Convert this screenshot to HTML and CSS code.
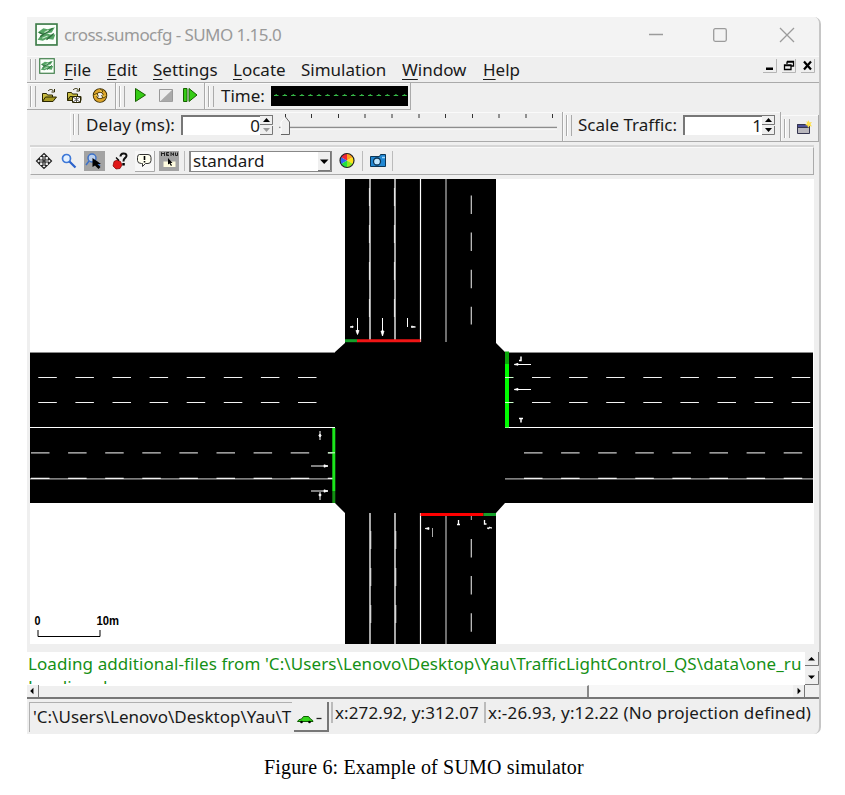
FILE: index.html
```
<!DOCTYPE html>
<html lang="en">
<head>
<meta charset="utf-8">
<title>cross.sumocfg - SUMO 1.15.0</title>
<link rel="stylesheet" href="styles.css">
</head>
<body>
<svg width="0" height="0" class="defs">
  <defs>
    <symbol id="logo" viewBox="0 0 22 22">
      <rect x="1" y="1" width="20" height="20" fill="#fafffa" stroke="#3e7d49" stroke-width="1.600"/>
      <path d="M2.500 9 8 5l4 1 7-2-3 5-5 1-4 1zM2.500 16l3-4 6-2 3 1 5 0-2 5-6-1-4 2z" fill="#56a565"/>
      <path d="M5 13 17 5M4 9l4 2M11 16l7-6" stroke="#2e6c3c" stroke-width="1.300"/>
      <path d="M9 9l4-2M7 14.500l5-2" stroke="#cfe9d2" stroke-width="1"/>
    </symbol>
  </defs>
</svg>
<main class="window">
  <header class="titlebar">
    <svg class="logo"><use href="#logo"/></svg>
    <span class="title">cross.sumocfg - SUMO 1.15.0</span>
    <svg class="win-buttons" width="146" height="16" viewBox="0 0 146 16" fill="none" stroke="#9b9b9b" stroke-width="1.300">
      <path d="M0 7.500h14"/><rect x="64.700" y="1.700" width="12.600" height="12.600" rx="1.500"/><path d="M131 1l14 14M145 1l-14 14"/>
    </svg>
  </header>

  <nav class="menubar">
    <i class="grip"></i>
    <svg class="logo small"><use href="#logo"/></svg>
    <span class="menu m-file"><u>F</u>ile</span>
    <span class="menu m-edit"><u>E</u>dit</span>
    <span class="menu m-settings"><u>S</u>ettings</span>
    <span class="menu m-locate"><u>L</u>ocate</span>
    <span class="menu m-sim">Simulation</span>
    <span class="menu m-window"><u>W</u>indow</span>
    <span class="menu m-help"><u>H</u>elp</span>
    <svg class="mdi" width="52" height="14" viewBox="0 0 52 14">
      <path d="M13.500 0v13.500H0M32.500 0v13.500H19M51.500 0v13.500H38" fill="none" stroke="#b5b5b5"/>
      <path d="M3 8.500h7v2.500H3z"/>
      <path d="M24 2.500h6.500v4.500h-2M24 5V2.500M21.500 6h6.500v4.500h-6.500zM24 3h6.500M21.500 6.500H28" fill="none" stroke="#000" stroke-width="1.300"/>
      <path d="M41 2.500l7 8M48 2.500l-7 8" stroke="#000" stroke-width="2.200"/>
    </svg>
  </nav>

  <section class="toolbar main-tools">
    <div class="dock files">
      <i class="grip"></i>
      <svg width="84" height="20" viewBox="0 0 84 20">
        <g stroke="#2a2600" fill="#c9bd43">
          <path d="M3.500 15.500v-8h4l1 1.500h5v2"/><path d="M3.500 15.500l3-4.500h11l-3.500 4.500z" fill="#a89b25"/><path d="M9 5c2-2 4-2 5.500 0M12.500 6h3V3" fill="none"/>
          <path d="M28.500 14.500v-8h4l1 1.500h5v2"/><path d="M28.500 14.500l2.500-4h11v4z" fill="#a89b25"/><path d="M34 4c2-2 4-2 5.500 0M37.500 5h3V2" fill="none"/>
          <path d="M33.500 10.500h8v6h-8z" fill="#fff"/><path d="M34 11l7 5M41 11l-7 5M37.500 11v5" fill="none" stroke="#555"/>
        </g>
        <circle cx="61" cy="9.500" r="5" fill="none" stroke="#3c2c00" stroke-width="4.500"/>
        <circle cx="61" cy="9.500" r="5" fill="none" stroke="#dca52b" stroke-width="2.800"/>
        <path d="M54 9l4-1.500 1.500 3M68 10l-4 2-1.500-3M61 3l3 2-2 2" fill="#f6cf50" stroke="#3c2c00" stroke-width=".8"/>
      </svg>
    </div>
    <div class="dock play">
      <i class="grip"></i>
      <svg width="66" height="20" viewBox="0 0 66 20">
        <path d="M2.500 2.500v13l10-6.500z" fill="#35cc16" stroke="#176000"/>
        <path d="M26.500 3.500h13v12h-13z" fill="#eee" stroke="#999"/><path d="M39 4v11.500H27z" fill="#aaa"/>
        <path d="M50.500 2.500h3.500v13h-3.500zM56 2.500v13l8-6.500z" fill="#35cc16" stroke="#176000"/>
      </svg>
    </div>
    <div class="dock time">
      <i class="grip"></i>
      <span class="label t-time">Time:</span>
      <svg class="lcd" width="137" height="20" viewBox="0 0 137 20">
        <path d="M3 9.500h134" stroke="#36b847" stroke-width="1.200" stroke-dasharray="4.500 4.050"/>
        <path d="M4.500 8.700h132" stroke="#36b847" stroke-width="1" stroke-dasharray="1.500 7.050"/>
      </svg>
    </div>
  </section>

  <section class="toolbar speed-tools">
    <div class="dock delay">
      <i class="grip"></i>
      <span class="label t-delay">Delay (ms):</span>
      <span class="spin s-delay">0<svg width="13" height="19" viewBox="0 0 13 19"><path d="M12.500 0v8.500H0M12.500 10v8.500H0" fill="none" stroke="#777"/><path d="M3 6l3.500-4L10 6z"/><path d="M3 12l3.500 4 3.500-4z" fill="#999"/></svg></span>
      <svg class="slider" width="282" height="24" viewBox="0 0 282 24">
        <path d="M6.500 1v4M32.500 1v4M59.500 1v4M86 1v4M113 1v4M140 1v4M166.500 1v4M193.500 1v4M220 1v4M247 1v4M273.500 1v4" stroke="#333"/>
        <path d="M0 14.500h278" stroke="#8d8d8d" stroke-width="1.500"/><path d="M0 16h278" stroke="#fff"/>
        <path d="M2 21.500V9L6.500 4l4 5v12.500z" fill="#efefef"/><path d="M2 21V9l4.500-5" fill="none" stroke="#fff"/><path d="M6.500 4l4 5v12.500H2" fill="none" stroke="#666"/>
      </svg>
    </div>
    <div class="dock scale">
      <i class="grip"></i>
      <span class="label t-scale">Scale Traffic:</span>
      <span class="spin s-scale">1<svg width="13" height="19" viewBox="0 0 13 19"><path d="M12.500 0v8.500H0M12.500 10v8.500H0" fill="none" stroke="#777"/><path d="M3 6l3.500-4L10 6z"/><path d="M3 12l3.500 4 3.500-4z"/></svg></span>
    </div>
    <div class="dock newview">
      <i class="grip"></i>
      <svg width="16" height="16" viewBox="0 0 16 16"><path d="M1.500 4.500h12v9h-12z" fill="#b9b7bd" stroke="#34344f"/><path d="M1.500 4.500h12v3h-12z" fill="#4b4f96" stroke="#34344f"/><path d="M12.500 0l1 2.500 2.500-.5-1.500 2 1.500 2.500-2.500-.5-1.500 2-.5-2.500L9 5l2-1.500-.5-2.500 1.500 1z" fill="#ffe14b"/></svg>
    </div>
  </section>

  <section class="viewbar">
    <svg width="158" height="24" viewBox="0 0 158 24">
      <g fill="#fff" stroke="#222" stroke-width="1.200"><path d="M14 4.500l3 3h-2v3.500h3.500V9l3 3-3 3v-2H15v3.500h2l-3 3-3-3h2V13H9.500v2l-3-3 3-3v2H13V7.500h-2z"/><circle cx="14" cy="12" r="1"/></g>
      <circle cx="36.500" cy="9.500" r="4" fill="#e4f1ff" stroke="#3d78d8" stroke-width="1.700"/><path d="M39.500 12.500l6 6" stroke="#2c62cb" stroke-width="2.200"/>
      <path d="M54 2h21v20H54z" fill="#a3a3a3"/><circle cx="62" cy="9" r="4" fill="#bcd0ee" stroke="#3d71c8" stroke-width="1.500"/><path d="M59 12l-3 4M66 12l4 5" stroke="#3d71c8" stroke-width="1.500"/><path d="M62.500 9v9l2.500-1.500 3.500 3.500 2-2-3-3h3.500z"/>
      <path d="M84 12.500l3-1.500 3.500 1.500 1.500 3.500-2 3.500-4 .5-3-3z" fill="#e01818" stroke="#7a0000" stroke-width=".7"/><path d="M86 8.500l3 3" stroke="#000" stroke-width="1.300"/><path d="M90.500 7.500c0-4 6-4 6-.8 0 2.500-3.300 2-3 5.800" fill="none" stroke="#111" stroke-width="2"/><path d="M92.300 14h2.500v2.500h-2.500z"/>
      <path d="M105 2h19v20h-19z" fill="#f7f7f7"/><path d="M124.500 2v20.500H105" fill="none" stroke="#aaa"/><path d="M109.500 5.500h8.500q3 0 3 3v3q0 3-3 3h-2.500l-3 3v-3h-1q-4 0-4-3v-3q0-3 2-3z" fill="#fffff0" stroke="#333"/><path d="M114.500 7v4M114.500 12v1.500" stroke="#000" stroke-width="1.600"/>
      <path d="M129 2h20v20h-20z" fill="#a3a3a3"/><path d="M133.500 12.500h12v5.500h-12z" fill="#fffcdf"/><path d="M131.500 7V3.500l1.500 1.500 1.500-1.500V7M139 3.500h-2.500v3h2.500M136.500 5.200h2M141 7V3.500l2.500 3V3.500M145.500 3.500v3h2v-3" fill="none" stroke="#222"/><path d="M138 9v6.500l1.500-1 1.500 2.500 1-.7-1.500-2.300h2z"/>
      <path d="M154.500 2v20" stroke="#bbb"/>
    </svg>
    <span class="combo">standard<svg width="13" height="19" viewBox="0 0 13 19"><path d="M12.500 0v18.500H0" fill="none" stroke="#777"/><path d="M2 7.500h8.500L6.200 12z"/></svg></span>
    <svg class="after" width="66" height="24" viewBox="0 0 66 24">
      <g stroke="none"><path d="M14 11.500V4.500A7 7 0 0 1 20 8z" fill="#ff9f1c"/><path d="M14 11.500L20 8a7 7 0 0 1 0 7z" fill="#ffe21c"/><path d="M14 11.500l6 3.500a7 7 0 0 1-6 3.500z" fill="#8be81c"/><path d="M14 11.500v7A7 7 0 0 1 8 15z" fill="#20df41"/><path d="M14 11.500L8 15a7 7 0 0 1 0-7z" fill="#2e66f0"/><path d="M14 11.500L8 8a7 7 0 0 1 6-3.500z" fill="#ec2538"/></g>
      <circle cx="14" cy="11.500" r="7" fill="none" stroke="#222" stroke-width="1.200"/>
      <path d="M29.500 2v20M59.500 2v20" stroke="#bbb"/>
      <path d="M37.500 7.500h9l1-2h5v12h-15z" fill="#2187d2" stroke="#0b3556"/><circle cx="44" cy="12.500" r="3.500" fill="#bfe6ff" stroke="#0b3556" stroke-width="1.300"/><path d="M49 8.500h3" stroke="#9ad7ff" stroke-width="1.500"/>
    </svg>
  </section>

  <section class="view">
    <svg width="784" height="465" viewBox="30 179 784 465">
      <path d="M345 179h151v164l9 9h308v151h-308l-9 10v131H345V513l-10-10H30V352h305l10-9z"/>
      <path d="M30 352.500h305M505 352.500h308" stroke="#8a8a8a"/>
      <g stroke="#fff" stroke-width="1.200">
        <path d="M30 427.500h305M505 427.500h308M420.500 179v163M420.500 513v131"/>
        <path d="M370 179v161M395 179v161" stroke-width="1.300"/><path d="M370 513v131M395 513v131" stroke-width="1.300"/>
        <path d="M369.400 188v18M394.400 188v18M369.400 225v18M394.400 225v18M369.400 262v18M394.400 262v18M369.400 299v18M394.400 299v18M370.800 531v18M395.800 531v18M370.800 568v18M395.800 568v18M370.800 605v18M395.800 605v18" stroke-width=".8"/>
      </g>
      <path d="M446 179v163M446 513v131M30 478.800h303M505 478.800h308" stroke="#aaa" stroke-width="1.300"/>
      <g stroke="#f2f2f2" stroke-width="1.200" stroke-dasharray="18.500 18.600">
        <path d="M38.300 377.500h280M38.300 402.500h280M532 377.500h279M532 402.500h279"/>
        <path d="M31 478.300h302M524 478.300h288"/>
        <path d="M31 452.800h302M524 452.800h288" stroke="#ccc"/>
        <path d="M471.300 195.500v129M471.300 539v105" stroke="#ccc"/>
      </g>
      <path d="M471.300 514v6" stroke="#bbb"/>
      <g stroke-width="3" fill="none">
        <path d="M345 340.700h12" stroke="#16a02a"/><path d="M357 340.700h63.500" stroke="#f01515"/>
        <path d="M420.500 514.500h63" stroke="#f00"/><path d="M483.500 514.500h12.500" stroke="#16a02a"/>
        <path d="M333.800 428v63" stroke="#1be51b"/><path d="M333.800 491v12" stroke="#129012"/>
        <path d="M507 364v63.500" stroke="#00fb00" stroke-width="4"/><path d="M507 351.500V364" stroke="#0ba60b" stroke-width="4"/>
      </g>
      <path d="M505 377.500h8.500M505 402.500h8.500M328 452.800h7" stroke="#cfc"/>
      <g class="arrows" stroke="#fff" fill="#fff">
        <path d="M357.500 318v16M382.500 318v17M407.500 318v9" fill="none"/>
        <path d="M356 330.500h3l-1.500 4zM381 331h3l-1.500 5zM350 327l3-1v1.500zM411.500 326v1.500l4-.5z" stroke-width=".8"/>
        <path d="M515 364.500h16M515 389.500h16M311 466h17M311 491h17" fill="none"/>
        <path d="M514 364.500l4-1.200v2zM514 389.500l4-1.200v2zM328 466l-4-1.200v2.400zM328 491l-4-1.200v2.400z" stroke-width=".7"/>
        <path d="M521 356.500v4h-2M519 418.500h4M521 418.500v4" stroke-width="1.500" fill="none"/>
        <path d="M320 431v9M320 492v8" fill="none"/><circle cx="320" cy="435.500" r="1"/><circle cx="320" cy="495" r="1"/>
        <path d="M432.500 528v9" stroke="#aaa"/><path d="M425 528.500l4-1v2zM487 528l5 0-3-1v2z" stroke-width=".7"/><path d="M458.500 520v4M457 524.500h3M484.500 520v4h2" fill="none" stroke-width="1.300"/>
      </g>
      <path d="M38 630v6.500h62V630" fill="none" stroke="#000"/>
      <text class="scale-text" x="34.500" y="625" textLength="6" lengthAdjust="spacingAndGlyphs">0</text>
      <text class="scale-text" x="96.500" y="625" textLength="22.500" lengthAdjust="spacingAndGlyphs">10m</text>
    </svg>
  </section>

  <section class="log">
    <div class="log-text"><p class="t-log">Loading additional-files from 'C:\Users\Lenovo\Desktop\Yau\TrafficLightControl_QS\data\one_ru</p><p>Loading done.</p></div>
    <svg width="14" height="33" viewBox="0 0 14 33"><path d="M0 0h14v33H0z" fill="#efefef"/><path d="M13.500 0v13.500H0M13.500 19v13.500H0" fill="none" stroke="#777"/><path d="M3 8.500h7L6.500 5zM3 23.500h7L6.500 27z"/></svg>
  </section>
  <section class="hscroll">
    <svg class="step" width="12" height="12" viewBox="0 0 12 12"><path d="M7 2.500v7L3.500 6z"/></svg>
    <i class="thumb"></i><i class="track"></i>
    <svg class="step" width="12" height="12" viewBox="0 0 12 12"><path d="M5 2.500v7L8.500 6z"/></svg>
  </section>

  <footer class="status">
    <div class="message"><span>'C:\Users\Lenovo\Desktop\Yau\T</span></div>
    <div class="car"><svg width="31" height="28" viewBox="0 0 31 28"><path d="M3.500 19.500q1-2.500 4-2.500l2-2.500h5l2.500 3q2 .5 2 2z" fill="#35d51b" stroke="#0c5b00"/><circle cx="7.500" cy="20" r="1.300"/><circle cx="15.500" cy="20" r="1.300"/><path d="M22.500 16.500h5" stroke="#222" stroke-width="1.300"/></svg></div>
    <div class="coord c-net"><span>x:272.92, y:312.07</span></div>
    <div class="coord c-geo"><span>x:-26.93, y:12.22 (No projection defined)</span></div>
  </footer>
</main>
<p class="caption">Figure 6: Example of SUMO simulator</p>
</body>
</html>
```
FILE: styles.css
```
* { box-sizing: border-box; }
body { margin: 0; padding: 17px 0 0 27px; background: #fff; height: 795px; overflow: hidden; font-family: "Noto Sans", "Open Sans", sans-serif; font-size: 17px; line-height: 22px; color: #1a1a1a; white-space: nowrap; }
p { margin: 0; }
svg { display: block; flex: none; }
.defs { position: absolute; }
.window { width: 794px; height: 717px; background: #efefef; border-right: 2px solid #c6c6c6; border-radius: 0 7px 7px 0; overflow: hidden; display: flex; flex-direction: column; }
.titlebar { height: 40px; flex: none; display: flex; align-items: center; background: #f3f3f3; padding: 0 24px 4px 8px; border-bottom: 1px solid #fbfbfb; color: #9a9a9a; }
.logo { width: 23px; height: 23px; }
.title { margin-left: 6px; letter-spacing: -.57px; }
.win-buttons { margin-left: auto; }
.menubar { height: 26px; flex: none; display: flex; align-items: center; border-bottom: 1px solid #aaa; padding-left: 3px; }
.grip { flex: none; width: 6px; height: 21px; border: solid #aaa; border-width: 0 1px; box-shadow: inset 1px 0 #fff; }
.logo.small { width: 16px; height: 16px; margin: -7px 9px 0 3px; }
.menu { flex: none; }
.menu u { text-decoration-thickness: 1px; text-underline-offset: 3px; }
.m-file { width: 43px; } .m-edit { width: 46px; } .m-settings { width: 80px; } .m-locate { width: 68px; } .m-sim { width: 101px; } .m-window { width: 81px; }
.mdi { margin: -8px 4px 0 auto; }
.toolbar { display: flex; flex: none; }
.dock { display: flex; align-items: center; border: solid #aaa; border-width: 0 1px 1px 0; box-shadow: inset 1px 1px #fafafa; padding-left: 3px; flex: none; }
.main-tools { height: 27px; }
.files { width: 89px; } .files svg { margin-left: 3px; }
.play { width: 89px; } .play svg { margin-left: 8px; }
.time { width: 206px; }
.label { flex: none; }
.t-time { margin-left: 7px; width: 50px; }
.lcd { background: #000; }
.speed-tools { height: 32px; padding-left: 43px; align-items: flex-end; }
.delay { width: 493px; height: 30px; padding-bottom: 4px; }
.t-delay { margin-left: 7px; width: 95px; letter-spacing: .1px; }
.spin { display: flex; justify-content: flex-end; align-items: center; height: 20px; background: #fff; border: solid #777; border-width: 2px 0 0 2px; flex: none; }
.spin svg { background: #efefef; margin-top: -1px; }
.s-delay { width: 92px; } .s-scale { width: 92px; }
.slider { margin: 0 0 0 6px; }
.scale { width: 218px; height: 30px; padding-bottom: 3px; } .t-scale { margin-left: 6px; width: 105px; }
.newview { flex: 1; height: 27px; } .newview .grip { height: 19px; } .newview svg { margin-left: 6px; }
.viewbar { height: 28px; margin: 5px 5px 0 3px; flex: none; display: flex; align-items: center; border: 1px solid #fafafa; border-right-color: #aaa; border-bottom-color: #aaa; box-shadow: 0 -2px #d6d6d6; }
.viewbar > svg:first-child { margin-left: -1px; }
.combo { width: 143px; height: 21px; margin-left: 1px; padding-left: 2px; background: #fff; border: solid #888; border-width: 1px 1px 1px 2px; display: flex; justify-content: space-between; align-items: center; flex: none; }
.combo svg { background: #efefef; }
.after { margin-left: 1px; }
.view { flex: none; margin: 4px 5px 0 3px; height: 465px; background: #fff; }
.scale-text { font: bold 12px "Liberation Sans", sans-serif; }
.log { flex: none; height: 33px; margin-top: 8px; display: flex; background: #fff; }
.log-text { width: 778px; height: 32px; overflow: hidden; padding-left: 1px; color: #159015; line-height: 23px; }
.t-log { letter-spacing: .085px; }
.hscroll { flex: none; height: 14px; display: flex; padding-right: 14px; border-bottom: 2px solid #777; }
.step { border-right: 1px solid #777; }
.thumb { width: 550px; border-right: 2px solid #888; border-top: 1px solid #fff; }
.track { flex: 1; background: #f7f7f7; }
.status { flex: 1; display: flex; padding: 3px 0 0 2px; }
.message { width: 263px; height: 30px; border: solid #b0b0b0; border-width: 1px 0 0 1px; padding: 3px 0 0 3px; overflow: hidden; flex: none; }
.car { width: 35px; height: 30px; margin-left: 2px; border: solid #777; border-width: 0 2px 2px 0; flex: none; }
.coord { height: 21px; border-left: 2px solid #bbb; padding-left: 2px; flex: none; }
.c-net { width: 149px; margin-left: 2px; letter-spacing: .1px; } .c-geo { margin-left: 4px; letter-spacing: .16px; }
.caption { margin: 22px 0 0 237px; font: 20px/22px "Liberation Serif", serif; letter-spacing: .17px; color: #000; }
```
